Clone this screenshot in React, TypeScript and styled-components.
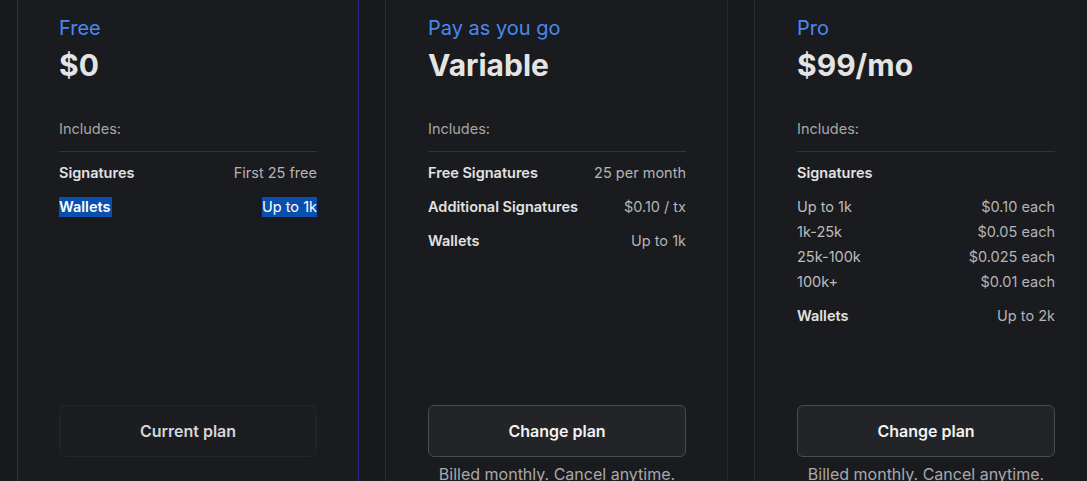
import React from "react";
import styled, { createGlobalStyle } from "styled-components";

const Global = createGlobalStyle`
  html, body { margin: 0; padding: 0; background: #18191b; overflow: hidden; }
  body { font-family: Inter, "Noto Sans", "Liberation Sans", sans-serif; -webkit-font-smoothing: antialiased; }
  * { box-sizing: border-box; }
`;

const Page = styled.div`
  width: 1087px;
  height: 481px;
  overflow: hidden;
  background: #18191b;
`;

const Grid = styled.div`
  display: grid;
  grid-template-columns: 342px 343px 343px;
  column-gap: 26px;
  padding-left: 17px;
  margin-top: -10px;
`;

const Card = styled.div<{ $active?: boolean; $shift?: number }>`
  height: 536px;
  display: flex;
  flex-direction: column;
  padding: 24px 41px 40px ${(p) => 41 + (p.$shift ?? 0)}px;
  background: #1a1b1e;
  border: 1px solid ${(p) => (p.$active ? "#2c2a96" : "#2a2b2e")};
  border-radius: 8px;
`;

const PlanName = styled.div`
  font-size: 20px;
  line-height: 26px;
  color: #4a88ee;
`;

const Price = styled.div`
  margin-top: 6px;
  font-size: 30px;
  line-height: 36px;
  font-weight: 700;
  color: #e4e4e4;
`;

const Includes = styled.div`
  margin-top: 36px;
  padding-bottom: 12px;
  border-bottom: 1px solid #333438;
  font-size: 14.5px;
  line-height: 20px;
  color: #a6a6a8;
`;

const Features = styled.div`
  flex: 1;
  padding-top: 11px;
  display: flex;
  flex-direction: column;
  gap: 14px;
`;

const TierList = styled.div`
  display: flex;
  flex-direction: column;
  gap: 5px;
`;

const Row = styled.div`
  display: flex;
  justify-content: space-between;
  font-size: 14.5px;
  line-height: 20px;
`;

const Label = styled.span<{ $bold?: boolean; $selected?: boolean }>`
  font-weight: ${(p) => (p.$bold ? 600 : 400)};
  color: ${(p) => (p.$selected ? "#ffffff" : p.$bold ? "#e2e2e2" : "#bdbdbf")};
  background: ${(p) => (p.$selected ? "#0b4fae" : "transparent")};
  padding-right: ${(p) => (p.$selected ? "2px" : "0")};
`;

const Value = styled.span<{ $selected?: boolean }>`
  color: ${(p) => (p.$selected ? "#ffffff" : "#b4b4b6")};
  background: ${(p) => (p.$selected ? "#0b4fae" : "transparent")};
`;

const Footer = styled.div`
  height: 80px;
  display: flex;
  flex-direction: column;
`;

const Button = styled.button<{ $current?: boolean }>`
  height: 52px;
  width: 100%;
  border-radius: 6px;
  font-family: inherit;
  font-size: 16px;
  font-weight: 600;
  cursor: pointer;
  background: ${(p) => (p.$current ? "#1c1d20" : "#232427")};
  border: 1px solid ${(p) => (p.$current ? "#25262c" : "#4a4b4f")};
  color: ${(p) => (p.$current ? "#d6d6d6" : "#f2f2f2")};
`;

const Note = styled.div`
  margin-top: 6px;
  text-align: center;
  font-size: 16px;
  line-height: 22px;
  color: #a9a9ab;
`;

export default function App() {
  return (
    <Page>
      <Global />
      <Grid>
        <Card $active>
          <PlanName>Free</PlanName>
          <Price>$0</Price>
          <Includes>Includes:</Includes>
          <Features>
            <Row>
              <Label $bold>Signatures</Label>
              <Value>First 25 free</Value>
            </Row>
            <Row>
              <Label $bold $selected>Wallets</Label>
              <Value $selected>Up to 1k</Value>
            </Row>
          </Features>
          <Footer>
            <Button $current>Current plan</Button>
          </Footer>
        </Card>

        <Card $shift={1}>
          <PlanName>Pay as you go</PlanName>
          <Price>Variable</Price>
          <Includes>Includes:</Includes>
          <Features>
            <Row>
              <Label $bold>Free Signatures</Label>
              <Value>25 per month</Value>
            </Row>
            <Row>
              <Label $bold>Additional Signatures</Label>
              <Value>$0.10 / tx</Value>
            </Row>
            <Row>
              <Label $bold>Wallets</Label>
              <Value>Up to 1k</Value>
            </Row>
          </Features>
          <Footer>
            <Button>Change plan</Button>
            <Note>Billed monthly. Cancel anytime.</Note>
          </Footer>
        </Card>

        <Card $shift={1}>
          <PlanName>Pro</PlanName>
          <Price>$99/mo</Price>
          <Includes>Includes:</Includes>
          <Features>
            <Row>
              <Label $bold>Signatures</Label>
            </Row>
            <TierList>
              <Row>
                <Label>Up to 1k</Label>
                <Value>$0.10 each</Value>
              </Row>
              <Row>
                <Label>1k-25k</Label>
                <Value>$0.05 each</Value>
              </Row>
              <Row>
                <Label>25k-100k</Label>
                <Value>$0.025 each</Value>
              </Row>
              <Row>
                <Label>100k+</Label>
                <Value>$0.01 each</Value>
              </Row>
            </TierList>
            <Row>
              <Label $bold>Wallets</Label>
              <Value>Up to 2k</Value>
            </Row>
          </Features>
          <Footer>
            <Button>Change plan</Button>
            <Note>Billed monthly. Cancel anytime.</Note>
          </Footer>
        </Card>
      </Grid>
    </Page>
  );
}
